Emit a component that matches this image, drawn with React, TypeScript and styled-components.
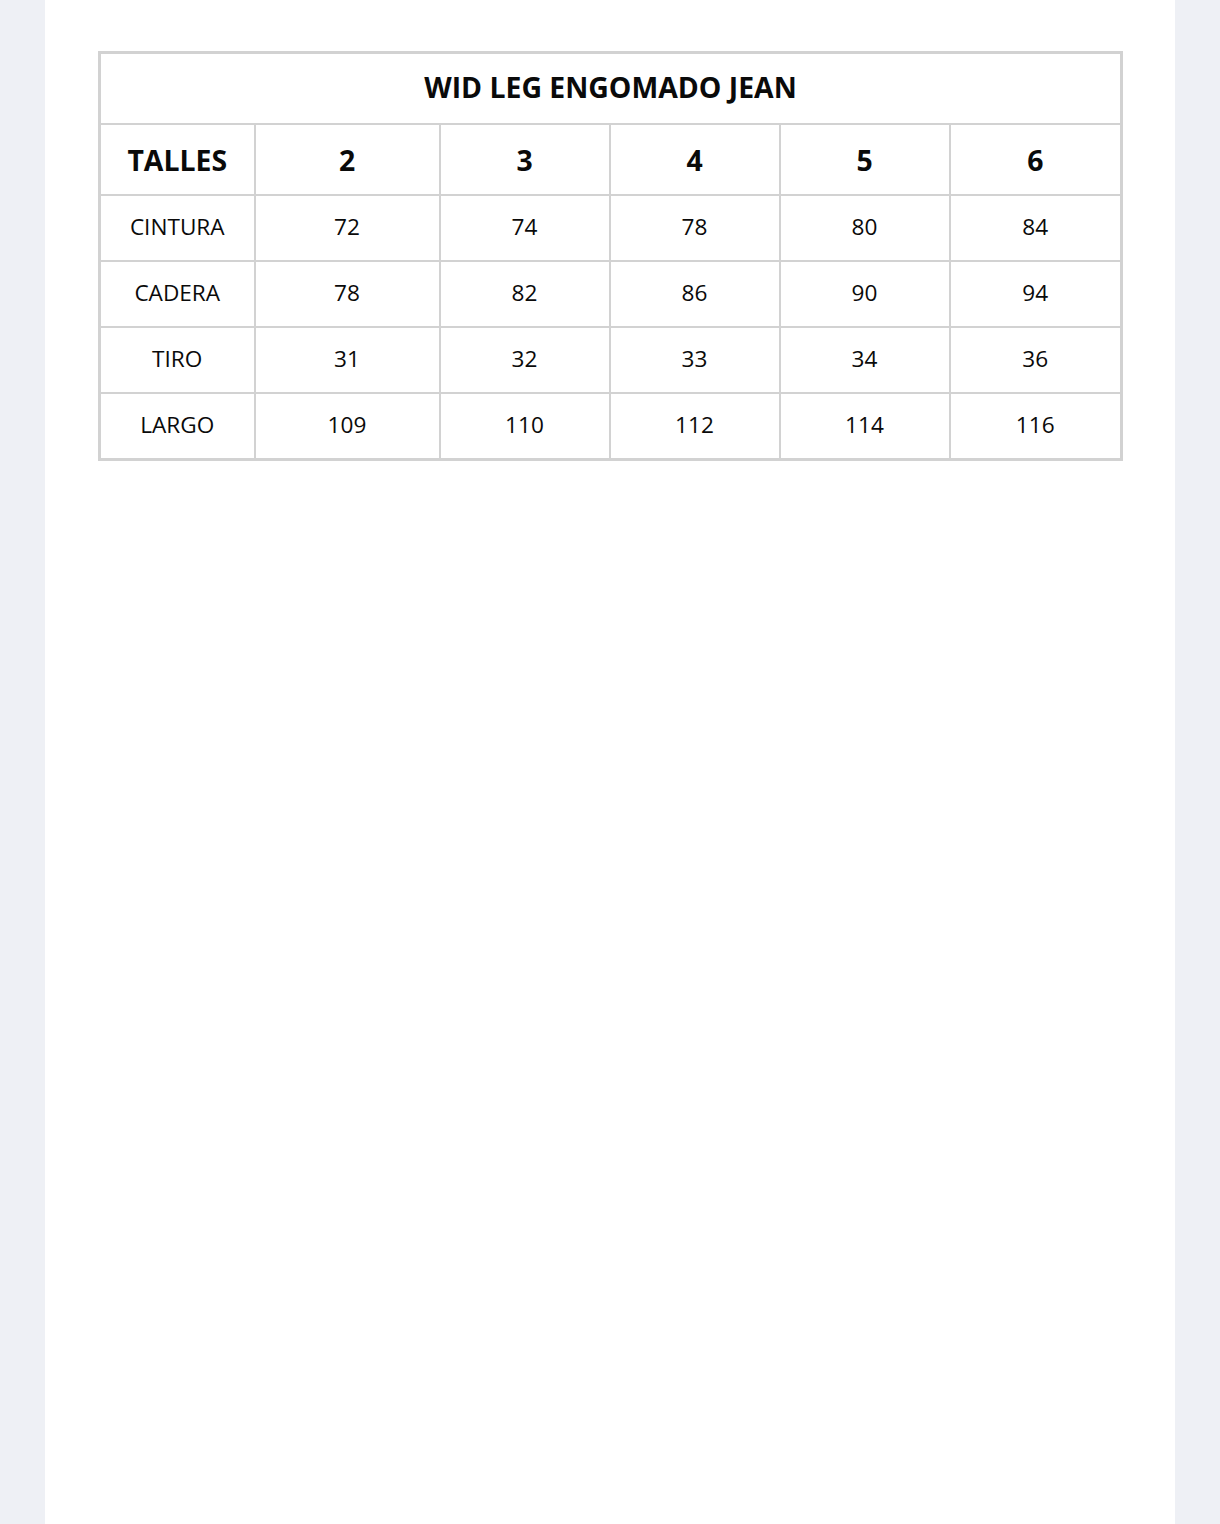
import styled, { createGlobalStyle } from "styled-components";

const GlobalStyle = createGlobalStyle`
  html, body {
    margin: 0;
    padding: 0;
    background: #eef0f5;
  }
  body {
    font-family: "Open Sans", "Liberation Sans", sans-serif;
    color: #0a0a0a;
  }
`;

const Page = styled.div`
  width: 1130px;
  min-height: 1524px;
  margin-left: 45px;
  background: #fff;
  padding: 51px 0 0 53px;
  box-sizing: border-box;
`;

const SizeTable = styled.table`
  border-collapse: collapse;
  table-layout: fixed;
  width: 1022px;
  border: 3px solid #d2d2d2;
`;

const Col = styled.col<{ $w: number }>`
  width: ${(p) => p.$w}px;
`;

const TitleCell = styled.th`
  height: 66px;
  font-size: 28.4px;
  font-weight: 700;
  text-align: center;
  border: 2.5px solid #d2d2d2;
  padding: 0 0 3px;
`;

const HeadCell = styled.th`
  height: 68px;
  font-size: 28.4px;
  font-weight: 700;
  text-align: center;
  border: 2.5px solid #d2d2d2;
  padding: 1px 0 0;
`;

const Cell = styled.td`
  height: 60px;
  font-size: 22.6px;
  font-weight: 400;
  text-align: center;
  border: 2.5px solid #d2d2d2;
  padding: 0 0 4px;
`;

const widths = [155, 185, 170, 170, 170, 172];
const sizes = ["2", "3", "4", "5", "6"];

const rows = [
  { label: "CINTURA", values: ["72", "74", "78", "80", "84"] },
  { label: "CADERA", values: ["78", "82", "86", "90", "94"] },
  { label: "TIRO", values: ["31", "32", "33", "34", "36"] },
  { label: "LARGO", values: ["109", "110", "112", "114", "116"] },
];

export default function App() {
  return (
    <>
      <GlobalStyle />
      <Page>
        <SizeTable>
          <colgroup>
            {widths.map((w, i) => (
              <Col key={i} $w={w} />
            ))}
          </colgroup>
          <thead>
            <tr>
              <TitleCell colSpan={6}>WID LEG ENGOMADO JEAN</TitleCell>
            </tr>
            <tr>
              <HeadCell>TALLES</HeadCell>
              {sizes.map((s) => (
                <HeadCell key={s}>{s}</HeadCell>
              ))}
            </tr>
          </thead>
          <tbody>
            {rows.map((r) => (
              <tr key={r.label}>
                <Cell>{r.label}</Cell>
                {r.values.map((v, i) => (
                  <Cell key={i}>{v}</Cell>
                ))}
              </tr>
            ))}
          </tbody>
        </SizeTable>
      </Page>
    </>
  );
}
